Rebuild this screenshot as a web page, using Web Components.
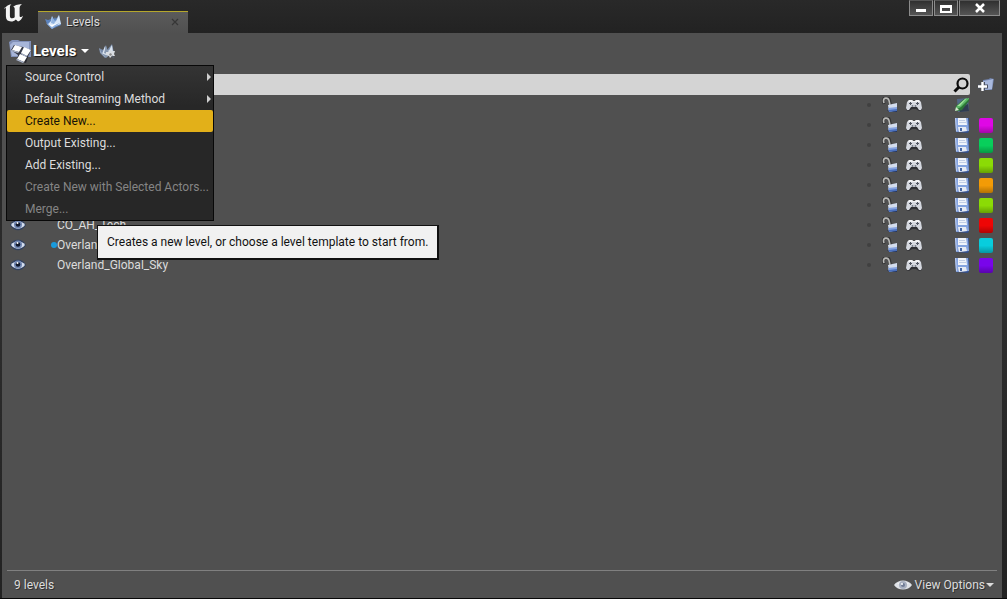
<!DOCTYPE html>
<html lang="en">
<head>
<meta charset="utf-8">
<title>Levels</title>
<style>
    html, body {
        height: 100%;
        margin: 0;
    }

    body {
        background: #111;
        color: #dcdcdc;
        font: 12px/16px Roboto, "Liberation Sans", sans-serif;
    }
</style>
</head>
<body>
<editor-window>
    <dock-tab slot="tabs">Levels</dock-tab>
    <level-toolbar></level-toolbar>
    <level-search></level-search>
    <level-list></level-list>
    <status-bar slot="footer">9 levels</status-bar>
</editor-window>

<script>
const icons = {
    logo: `<svg viewBox="0 0 20 20" width="20" height="20"><path fill="#f4f4f4" d="M.5 6.2C1.600 3.400 4.300 1.600 7.400 1.200 6.200 2 5.900 3 5.900 4.500v8.200c0 1.800.8 2.600 2.300 2.600 1 0 1.900-.4 2.500-1.100V5.800c0-1.200-.5-1.700-1.600-1.700 1.200-1.600 3.900-2.900 8.900-3.200-1.700 1.200-2.400 2.400-2.400 4.300v7.600c0 .9.4 1.300 1 1.300.7 0 1.400-.5 2.400-1.400-.9 3-2.600 5-5 5.800l-2.200-2c-1.400 1.400-2.800 2-4.700 2-3.400 0-5.200-1.800-5.200-5.200V6c0-1-.3-1.500-.9-1.500-.3 0-.5.6-.5 1.700z"/></svg>`,
    levels: `<svg viewBox="0 0 18 16" width="18" height="16"><path fill="#5c83bd" d="M1 5l3 1 3-1 1-3 2 3 1-2 1 2 3-4 2 10-9 4-5-5z"/><path fill="#d7e7f9" d="M1 5l3 5 3-3 1-5 2 6 2-1 3-6 2 9-8 3-5-3z"/><path fill="#8fb2df" d="M8 3l-1 6 3 1 4-8-3 5zM2 9l5 3 9-3-8 6z"/><path fill="#fff" d="M4 10l4 1 6-2-6 4z"/></svg>`,
    levelsEdit: `<svg viewBox="0 0 18 16" width="18" height="16"><path fill="#778aa8" d="M1 5l4 2 3-5 1 5 5-6 2 9-9 5-5-5z"/><path fill="#dbe4ef" d="M1 5l3 6 3-8 1 5 3-1 3-5 1 7-8 5-4-4z"/><path fill="#8798af" d="M8 3l-2 7 3 1 4-7-3 4zM3 10l5 2 5-2-5 5z"/><path fill="#d9dde2" d="M8 9h3l1-2 2 1 3 0-1 3 1 2-3 0-2 2-1-2-3-1z"/><path fill="#8b8b8b" d="M12 10l2 1-1 2-2-1z"/><path d="M14 13l2 2" stroke="#555c68" stroke-width="1.500"/></svg>`,
    folder: `<svg viewBox="0 0 24 24" width="24" height="24"><path fill="#8291b9" d="M1 3l3-2h6l2 1h11v16H3z"/><path fill="#a7b5d8" d="M2 6l3-3h16v14H4z"/><path fill="#1b1d25" opacity=".8" d="M3 11l3-5 9 2 8 3-3 7-2 6-9-3 1-5z"/><path fill="#fff" d="M7 6l7 2-3 5-7-2zM16 8l7 3-4 6-6-3zM12 15l7 3-3 5-7-3z"/><path fill="#aeb8ce" d="M4 11l7 2-1 1-7-2zM13 14l6 3-1 1-5-3zM9 20l7 3-1 1-7-3z"/></svg>`,
    chevron: `<svg viewBox="0 0 10 6" width="10" height="6"><path fill="currentColor" d="M1 1h8L5 5z"/></svg>`,
    arrow: `<svg viewBox="0 0 6 10" width="6" height="10"><path fill="#cfcfcf" d="M1 1l4 4-4 4z"/></svg>`,
    search: `<svg viewBox="0 0 18 18" width="18" height="18"><circle cx="10.500" cy="7.500" r="5" fill="none" stroke="#0b0b0b" stroke-width="2.200"/><path d="M7 11l-4.500 4.500" stroke="#0b0b0b" stroke-width="3"/></svg>`,
    addFolder: `<svg viewBox="0 0 16 16" width="16" height="16"><path fill="#7183ad" d="M5 3l6-1 1-1 4 1-2 11H6z"/><path fill="#a9b9dd" d="M5 4l6-1 4-1-1 10-7 1z"/><path d="M0 9.500h10M5 5v9" stroke="#4b5262" stroke-width="4"/><path d="M0 9.500h9M4.500 5v9" stroke="#fff" stroke-width="2.400"/></svg>`,
    eye: `<svg viewBox="0 0 16 12" width="16" height="12"><path fill="#31415f" d="M0 6C3-1 13-1 16 6c-4 7-12 7-16 0z"/><path fill="#d5deee" d="M1 6c3-5 11-5 14 0-4 5-10 5-14 0z"/><circle cx="8" cy="5.500" r="4" fill="#6f85b1"/><circle cx="8" cy="5.500" r="2.300" fill="#10182d"/><circle cx="7.500" cy="4" r="1" fill="#fff"/></svg>`,
    viewEye: `<svg viewBox="0 0 18 12" width="18" height="12"><path fill="#dfe2e7" d="M0 6C4 0 14 0 18 6 14 12 4 12 0 6z"/><path fill="#f7f7f7" d="M3 5c3-3 9-3 12 0-4-1-8-1-12 0z"/><circle cx="9" cy="6" r="4" fill="#a8b0c0"/><circle cx="9" cy="6" r="2" fill="#6f7b94"/><circle cx="8" cy="5" r="1" fill="#fff"/></svg>`,
    lock: `<svg viewBox="0 0 16 16" width="16" height="16"><path d="M2 7L1.500 4C1 0 6.500-.5 7.500 3l1 5" fill="none" stroke="#353535" stroke-width="3"/><path d="M2 6l-.5-2C1.500.5 6 0 7 3.500L8 8" fill="none" stroke="#b9b9b7" stroke-width="1.600"/><path fill="#273455" d="M5 13h10v2H7z"/><path fill="#d3dced" d="M6 8l9-2v7l-8 2z"/><path fill="#86a3df" d="M6 11l9-1v3l-8 1z"/><path fill="#4b70bd" d="M7 13l8-1v2l-8 1z"/></svg>`,
    gamepad: `<svg viewBox="0 0 16 12" width="16" height="12"><path fill="#303135" d="M1 4h14l1 7-3 1-3-2H6l-3 2-3-1z"/><path fill="#d5d8df" d="M3 1h3l1 1h2l1-1h3l2 2 1 6-1 2h-2l-2-3H5l-2 3H1L0 9l1-6z"/><path fill="#f3f4f6" d="M3 1h3l1 1h2l1-1h3l1 2H2z"/><path fill="#505561" d="M4 3h1v1h1v1H5v1H4V5H3V4h1zM11 3h1v1h1v1h-1v1h-1V5h-1V4h1z"/><circle cx="6.500" cy="7" r="1" fill="#777d8a"/><circle cx="9.500" cy="7" r="1" fill="#777d8a"/></svg>`,
    save: `<svg viewBox="0 0 16 16" width="16" height="16"><path fill="#344f8c" d="M2 2l13-1v13l-1 2-12-1z"/><path fill="#86a4df" d="M1 1l13 0 1 13-13 1z"/><path fill="#f1f4fa" d="M4 1h8l1 7H4z"/><path fill="#c3cee5" d="M5 3h6v1H5zM5 5h7v1H5z"/><path fill="#e7ebf3" d="M4 10h8l1 4-8 1z"/><path fill="#4767a5" d="M6 11h2v3H6z"/><path fill="#bdcdf1" d="M1 1h1l1 13H2z"/></svg>`,
    current: `<svg viewBox="0 0 16 16" width="16" height="16"><path fill="#536888" d="M3 2l11-1 1 13-11 1z"/><path fill="#303c50" d="M5 11l9-4 1 7-9 1z"/><path fill="#2c7536" d="M1 14l1-5 8-7 5-1v3l-7 9-4 1z"/><path fill="#5cb967" d="M2 10l9-8 4-1v1l-8 8-4 2z"/><path fill="#a0df9b" d="M3 9l8-7 2-1-7 8z"/><path fill="#d7e7cf" d="M1 14l1-4 3 3z"/></svg>`,
    minimize: `<svg viewBox="0 0 12 12" width="12" height="12"><path fill="#fff" d="M1 7h10v3H1z"/></svg>`,
    maximize: `<svg viewBox="0 0 12 12" width="12" height="12"><path fill="#fff" fill-rule="evenodd" d="M0 3h12v8H0zM2 6v3h8V6z"/></svg>`,
    close: `<svg viewBox="0 0 12 12" width="12" height="12"><path d="M2 2l8 8M10 2l-8 8" stroke="#fff" stroke-width="2.500"/></svg>`,
    closeTab: `<svg viewBox="0 0 8 8" width="8" height="8"><path d="M1 1l6 6M7 1L1 7" stroke="#363636" stroke-width="1.200"/></svg>`
};

const levels = [
    { current: true },
    { color: '#df08e5' },
    { color: '#08cf5b' },
    { color: '#8bdb05' },
    { color: '#f39b06' },
    { color: '#8bdb05' },
    { name: 'CO_AH_Tech', color: '#ee0505' },
    { name: 'Overland', color: '#08cddd', loaded: true },
    { name: 'Overland_Global_Sky', color: '#7905ea' }
];

const buttonReset = `
    button {
        margin: 0;
        padding: 0;
        border: 0;
        background: none;
        color: inherit;
        font: inherit;
        text-shadow: inherit;
        display: flex;
        align-items: center;
        justify-content: center;
    }
`;

class UiIcon extends HTMLElement {
    constructor() {
        super();
        this.attachShadow({ mode: 'open' });
    }

    connectedCallback() {
        this.shadowRoot.innerHTML = `
        <style>
            :host { display: inline-flex; flex: none; }
            svg { display: block; }
        </style>
        ${icons[this.getAttribute('name')]}
        `;
        this.setAttribute('aria-hidden', 'true');
    }
}

class EditorWindow extends HTMLElement {
    constructor() {
        super();
        this.attachShadow({ mode: 'open' });
        this.shadowRoot.innerHTML = `
        <style>
            ${buttonReset}
            :host {
                display: flex;
                flex-direction: column;
                box-sizing: border-box;
                height: 100vh;
                padding: 0 5px 0 2px;
                background: linear-gradient(#292929, #222 33px, #2d2d2d 50%, #222);
                border-bottom: 1px solid #080808;
            }
            header {
                display: flex;
                height: 33px;
                flex: none;
            }
            .logo {
                width: 36px;
                padding: 3px 0 0 2px;
                box-sizing: border-box;
            }
            .tabs {
                flex: 1;
                display: flex;
                align-items: flex-end;
            }
            .controls {
                display: flex;
                gap: 1px;
                margin-right: 2px;
            }
            .controls button {
                box-sizing: border-box;
                width: 24px;
                height: 16px;
                border: 1px solid #8c8c8c;
                border-top-color: #555;
                background: linear-gradient(#303030, #555);
            }
            .controls button:last-child { width: 41px; }
            main {
                flex: 1;
                min-height: 0;
                display: flex;
                flex-direction: column;
                background: #505050;
            }
            .content { flex: 1; min-height: 0; }
        </style>
        <header>
            <div class="logo"><ui-icon name="logo"></ui-icon></div>
            <div class="tabs"><slot name="tabs"></slot></div>
            <div class="controls">
                <button aria-label="Minimize"><ui-icon name="minimize"></ui-icon></button>
                <button aria-label="Maximize"><ui-icon name="maximize"></ui-icon></button>
                <button aria-label="Close"><ui-icon name="close"></ui-icon></button>
            </div>
        </header>
        <main>
            <div class="content"><slot></slot></div>
            <slot name="footer"></slot>
        </main>
        `;
    }
}

class DockTab extends HTMLElement {
    constructor() {
        super();
        this.attachShadow({ mode: 'open' });
        this.shadowRoot.innerHTML = `
        <style>
            ${buttonReset}
            :host {
                display: flex;
                align-items: center;
                box-sizing: border-box;
                width: 150px;
                height: 22px;
                padding: 0 9px 2px 6px;
                gap: 4px;
                border-top: 1px solid #b5a72c;
                background: linear-gradient(#5b5b5b, #505050);
                text-shadow: 1px 1px #222;
            }
            span { flex: 1; }
        </style>
        <ui-icon name="levels"></ui-icon>
        <span><slot></slot></span>
        <button aria-label="Close tab"><ui-icon name="closeTab"></ui-icon></button>
        `;
    }
}

class LevelToolbar extends HTMLElement {
    constructor() {
        super();
        this.attachShadow({ mode: 'open' });
        this.shadowRoot.innerHTML = `
        <style>
            ${buttonReset}
            :host {
                display: flex;
                align-items: center;
                gap: 8px;
                height: 41px;
                box-sizing: border-box;
                padding: 0 6px 5px;
                position: relative;
            }
            .title {
                color: #fff;
                font-size: 15px;
                font-weight: bold;
                text-shadow: 1px 1px 1px #111;
            }
            .title span { margin: 0 4px 0 1px; }
            drop-menu {
                position: absolute;
                left: 4px;
                top: 32px;
                z-index: 1;
            }
            tool-tip {
                position: absolute;
                left: 95px;
                top: 192px;
                z-index: 2;
            }
        </style>
        <button class="title" aria-haspopup="menu" aria-expanded="true">
            <ui-icon name="folder"></ui-icon><span>Levels</span><ui-icon name="chevron"></ui-icon>
        </button>
        <button aria-label="Level details"><ui-icon name="levelsEdit"></ui-icon></button>
        <drop-menu>
            <menu-entry submenu>Source Control</menu-entry>
            <menu-entry submenu>Default Streaming Method</menu-entry>
            <menu-entry selected>Create New...</menu-entry>
            <menu-entry>Output Existing...</menu-entry>
            <menu-entry>Add Existing...</menu-entry>
            <menu-entry disabled>Create New with Selected Actors...</menu-entry>
            <menu-entry disabled>Merge...</menu-entry>
        </drop-menu>
        <tool-tip>Creates a new level, or choose a level template to start from.</tool-tip>
        `;
    }
}

class DropMenu extends HTMLElement {
    constructor() {
        super();
        this.attachShadow({ mode: 'open' });
        this.shadowRoot.innerHTML = `
        <style>
            :host {
                display: block;
                border: 1px solid #080808;
                background: linear-gradient(#343434, #272727 40px);
            }
        </style>
        <div role="menu"><slot></slot></div>
        `;
    }
}

class MenuEntry extends HTMLElement {
    constructor() {
        super();
        this.attachShadow({ mode: 'open' });
    }

    connectedCallback() {
        const disabled = this.hasAttribute('disabled') ? 'disabled' : '';
        const arrow = this.hasAttribute('submenu') ? '<ui-icon name="arrow"></ui-icon>' : '';

        this.shadowRoot.innerHTML = `
        <style>
            ${buttonReset}
            :host { display: block; }
            button {
                box-sizing: border-box;
                width: 100%;
                min-width: 206px;
                height: 22px;
                padding: 0 1px 0 18px;
                justify-content: space-between;
                white-space: nowrap;
            }
            button:disabled { color: #858585; padding-right: 4px; }
            :host([selected]) button {
                border-radius: 2px;
                background: #e2b019;
                color: #171307;
            }
        </style>
        <button role="menuitem" ${disabled}><slot></slot>${arrow}</button>
        `;
    }
}

class ToolTip extends HTMLElement {
    constructor() {
        super();
        this.attachShadow({ mode: 'open' });
        this.shadowRoot.innerHTML = `
        <style>
            :host {
                display: block;
                padding: 8px 9px;
                border: 1px solid #111;
                border-width: 1px 2px 2px 1px;
                background: #f1f1f1;
                color: #111;
                white-space: nowrap;
            }
        </style>
        <div role="tooltip"><slot></slot></div>
        `;
    }
}

class LevelSearch extends HTMLElement {
    constructor() {
        super();
        this.attachShadow({ mode: 'open' });
        this.shadowRoot.innerHTML = `
        <style>
            ${buttonReset}
            :host {
                display: flex;
                align-items: center;
                gap: 8px;
                height: 21px;
                padding: 0 8px 0 5px;
            }
            label {
                flex: 1;
                display: flex;
                align-items: center;
                height: 21px;
                background: #d4d4d4;
                border-radius: 2px;
            }
            input {
                flex: 1;
                min-width: 0;
                padding: 0 4px;
                border: 0;
                outline: 0;
                background: none;
                font: inherit;
            }
        </style>
        <label>
            <input type="text" aria-label="Search levels">
            <ui-icon name="search"></ui-icon>
        </label>
        <button aria-label="New folder"><ui-icon name="addFolder"></ui-icon></button>
        `;
    }
}

class LevelList extends HTMLElement {
    constructor() {
        super();
        this.attachShadow({ mode: 'open' });
    }

    connectedCallback() {
        this.shadowRoot.innerHTML = `
        <style>
            ${buttonReset}
            :host { display: block; padding: 0 4px 0 5px; }
            table {
                width: 100%;
                table-layout: fixed;
                border-collapse: collapse;
            }
            td { height: 20px; padding: 0; }
            .wide { width: 28px; }
            .eye { width: 22px; }
            .mark { width: 18px; }
            .tool { width: 24px; }
            button { width: 100%; height: 20px; }
            .loaded, .dot {
                display: block;
                width: 6px;
                height: 6px;
                margin-left: auto;
                border-radius: 50%;
                background: #199bdd;
            }
            .dot {
                width: 4px;
                height: 4px;
                margin: auto;
                background: #404040;
            }
            .swatch {
                width: 14px;
                height: 15px;
                border-radius: 2px;
                background: linear-gradient(#0000, #0000 50%, #0004) var(--level-color);
            }
        </style>
        <table>
            <colgroup>
                <col class="eye"><col class="wide"><col>
                <col class="mark"><col class="tool"><col class="tool"><col class="tool"><col class="tool"><col class="tool">
            </colgroup>
            <tbody>${levels.map((level) => this.row(level)).join('')}</tbody>
        </table>
        `;
    }

    row(level) {
        return `
        <tr>
            <td><button aria-label="Toggle visibility"><ui-icon name="eye"></ui-icon></button></td>
            <td>${level.loaded ? '<span class="loaded"></span>' : ''}</td>
            <td>${level.name || ''}</td>
            <td><span class="dot"></span></td>
            <td><button aria-label="Toggle lock"><ui-icon name="lock"></ui-icon></button></td>
            <td><button aria-label="Open blueprint"><ui-icon name="gamepad"></ui-icon></button></td>
            <td></td>
            <td><button aria-label="Save level"><ui-icon name="${level.current ? 'current' : 'save'}"></ui-icon></button></td>
            <td>${level.color ? `<button aria-label="Change color"><span class="swatch" style="--level-color: ${level.color}"></span></button>` : ''}</td>
        </tr>
        `;
    }
}

class StatusBar extends HTMLElement {
    constructor() {
        super();
        this.attachShadow({ mode: 'open' });
        this.shadowRoot.innerHTML = `
        <style>
            ${buttonReset}
            :host {
                display: flex;
                align-items: center;
                justify-content: space-between;
                height: 27px;
                margin: 0 5px;
                padding: 0 2px 0 7px;
                border-top: 1px solid #808080;
                text-shadow: 1px 1px #333;
            }
            button { gap: 3px; }
            .label { display: flex; align-items: center; }
        </style>
        <span><slot></slot></span>
        <button aria-haspopup="menu">
            <ui-icon name="viewEye"></ui-icon>
            <span class="label">View Options<ui-icon name="chevron"></ui-icon></span>
        </button>
        `;
    }
}

customElements.define('ui-icon', UiIcon);
customElements.define('editor-window', EditorWindow);
customElements.define('dock-tab', DockTab);
customElements.define('level-toolbar', LevelToolbar);
customElements.define('drop-menu', DropMenu);
customElements.define('menu-entry', MenuEntry);
customElements.define('tool-tip', ToolTip);
customElements.define('level-search', LevelSearch);
customElements.define('level-list', LevelList);
customElements.define('status-bar', StatusBar);
</script>
</body>
</html>
